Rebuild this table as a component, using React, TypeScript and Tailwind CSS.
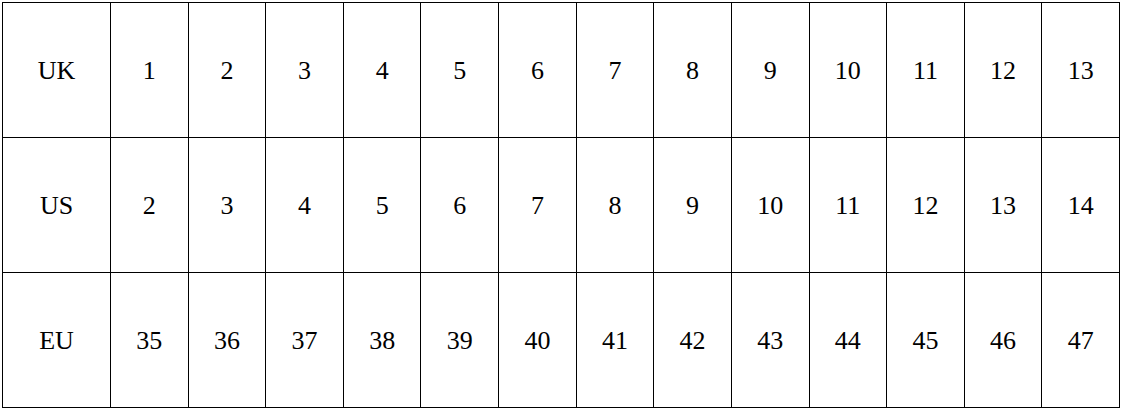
const rows: [string, string[]][] = [
  ["UK", ["1", "2", "3", "4", "5", "6", "7", "8", "9", "10", "11", "12", "13"]],
  ["US", ["2", "3", "4", "5", "6", "7", "8", "9", "10", "11", "12", "13", "14"]],
  ["EU", ["35", "36", "37", "38", "39", "40", "41", "42", "43", "44", "45", "46", "47"]],
];

export default function App() {
  return (
    <div className="h-[411px] w-[1122px] bg-white pl-[2px] pt-[2px] font-['Liberation_Serif','Times_New_Roman',serif] text-[26px] text-black">
      {/* size chart — label column + 13 size columns */}
      <div className="grid w-[1118px] grid-cols-[108px_repeat(13,minmax(0,1fr))] border-l border-t border-black">
        {rows.map(([label, sizes]) => (
          <>
            <div key={label} className="flex h-[135px] items-center justify-center border-b border-r border-black">
              {label}
            </div>
            {sizes.map((s, i) => (
              <div key={label + i} className="flex h-[135px] items-center justify-center border-b border-r border-black">
                {s}
              </div>
            ))}
          </>
        ))}
      </div>
    </div>
  );
}
